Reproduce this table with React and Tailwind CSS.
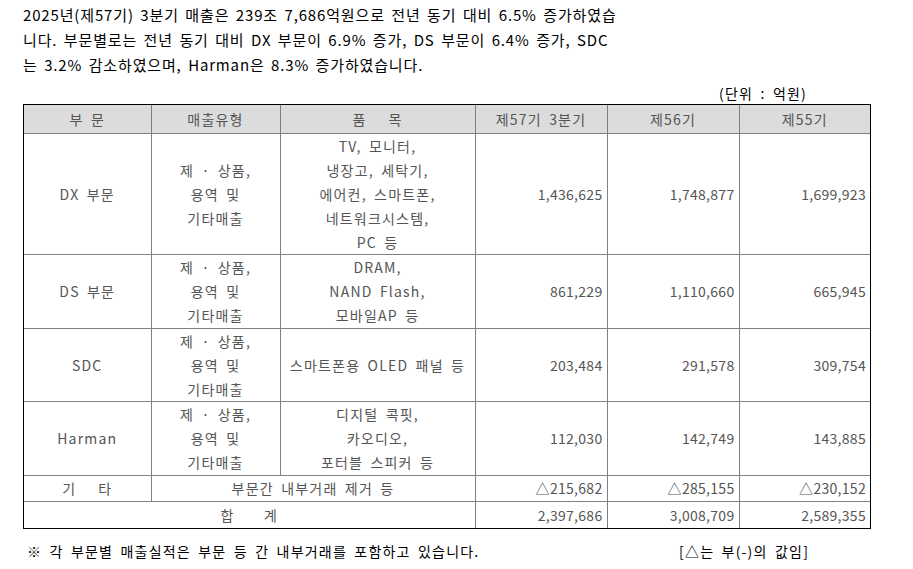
import React from 'react';

const rows = [
  { seg: 'DX 부문', type: ['제 · 상품,', '용역 및', '기타매출'], items: ['TV, 모니터,', '냉장고, 세탁기,', '에어컨, 스마트폰,', '네트워크시스템,', 'PC 등'], v: ['1,436,625', '1,748,877', '1,699,923'], h: 'h-[120px]' },
  { seg: 'DS 부문', type: ['제 · 상품,', '용역 및', '기타매출'], items: ['DRAM,', 'NAND Flash,', '모바일AP 등'], v: ['861,229', '1,110,660', '665,945'], h: 'h-[74px]' },
  { seg: 'SDC', type: ['제 · 상품,', '용역 및', '기타매출'], items: ['스마트폰용 OLED 패널 등'], v: ['203,484', '291,578', '309,754'], h: 'h-[73px]' },
  { seg: 'Harman', type: ['제 · 상품,', '용역 및', '기타매출'], items: ['디지털 콕핏,', '카오디오,', '포터블 스피커 등'], v: ['112,030', '142,749', '143,885'], h: 'h-[74px]' },
];

const cell = 'border border-[#808080] px-[4px] align-middle';
const txt = `${cell} text-center tracking-[1.2px] [word-spacing:3px] whitespace-nowrap`;
const num = `${cell} text-right tracking-[0.3px]`;

export default function App() {
  return (
    <div className="w-[913px] h-[569px] bg-white text-black font-['Noto_Sans_CJK_KR',sans-serif] overflow-hidden">
      <p className="pl-[23px] pt-[2px] text-[15px] leading-[25px] tracking-[0.85px] [word-spacing:2.3px] whitespace-nowrap">
        2025년(제57기) 3분기 매출은 239조 7,686억원으로 전년 동기 대비 6.5% 증가하였습<br />
        니다. 부문별로는 전년 동기 대비 DX 부문이 6.9% 증가, DS 부문이 6.4% 증가, SDC<br />
        는 3.2% 감소하였으며, Harman은 8.3% 증가하였습니다.
      </p>

      <div className="flex justify-end pr-[106px] pt-[6px] text-[14px] leading-[20px] tracking-[1.2px] [word-spacing:3px]">(단위 : 억원)</div>

      <div className="ml-[23px] mt-[1px] w-[848px] border border-black">
        <table className="w-full table-fixed border-collapse border-hidden text-[14px] leading-[24px] text-[#555]">
          <colgroup>
            <col className="w-[127px]" />
            <col className="w-[129px]" />
            <col className="w-[195px]" />
            <col className="w-[132px]" />
            <col className="w-[132px]" />
            <col />
          </colgroup>
          <thead>
            <tr className="h-[28px] bg-[#dcdcdc]">
              <th className={`${txt} font-normal`}>부 문</th>
              <th className={`${txt} font-normal`}>매출유형</th>
              <th className={`${txt} font-normal`}>품&nbsp;&nbsp;&nbsp;목</th>
              <th className={`${txt} font-normal`}>제57기 3분기</th>
              <th className={`${txt} font-normal`}>제56기</th>
              <th className={`${txt} font-normal`}>제55기</th>
            </tr>
          </thead>
          <tbody>
            {rows.map((r) => (
              <tr key={r.seg} className={r.h}>
                <td className={txt}>{r.seg}</td>
                <td className={txt}>
                  {r.type.map((t) => <div key={t}>{t}</div>)}
                </td>
                <td className={txt}>
                  {r.items.map((t) => <div key={t}>{t}</div>)}
                </td>
                {r.v.map((v, i) => (
                  <td key={i} className={num}>{v}</td>
                ))}
              </tr>
            ))}
            <tr className="h-[26px]">
              <td className={txt}>기&nbsp;&nbsp;&nbsp;타</td>
              <td colSpan={2} className={txt}>부문간 내부거래 제거 등</td>
              <td className={num}>△215,682</td>
              <td className={num}>△285,155</td>
              <td className={num}>△230,152</td>
            </tr>
            <tr className="h-[27px]">
              <td colSpan={3} className={txt}>합&nbsp;&nbsp;&nbsp;&nbsp;계</td>
              <td className={num}>2,397,686</td>
              <td className={num}>3,008,709</td>
              <td className={num}>2,589,355</td>
            </tr>
          </tbody>
        </table>
      </div>

      <div className="flex pl-[27px] pt-[10px] text-[14px] leading-[24px] tracking-[1.2px] [word-spacing:3px] whitespace-nowrap">
        <span className="w-[652px]">※ 각 부문별 매출실적은 부문 등 간 내부거래를 포함하고 있습니다.</span>
        <span>[△는 부(-)의 값임]</span>
      </div>
    </div>
  );
}
